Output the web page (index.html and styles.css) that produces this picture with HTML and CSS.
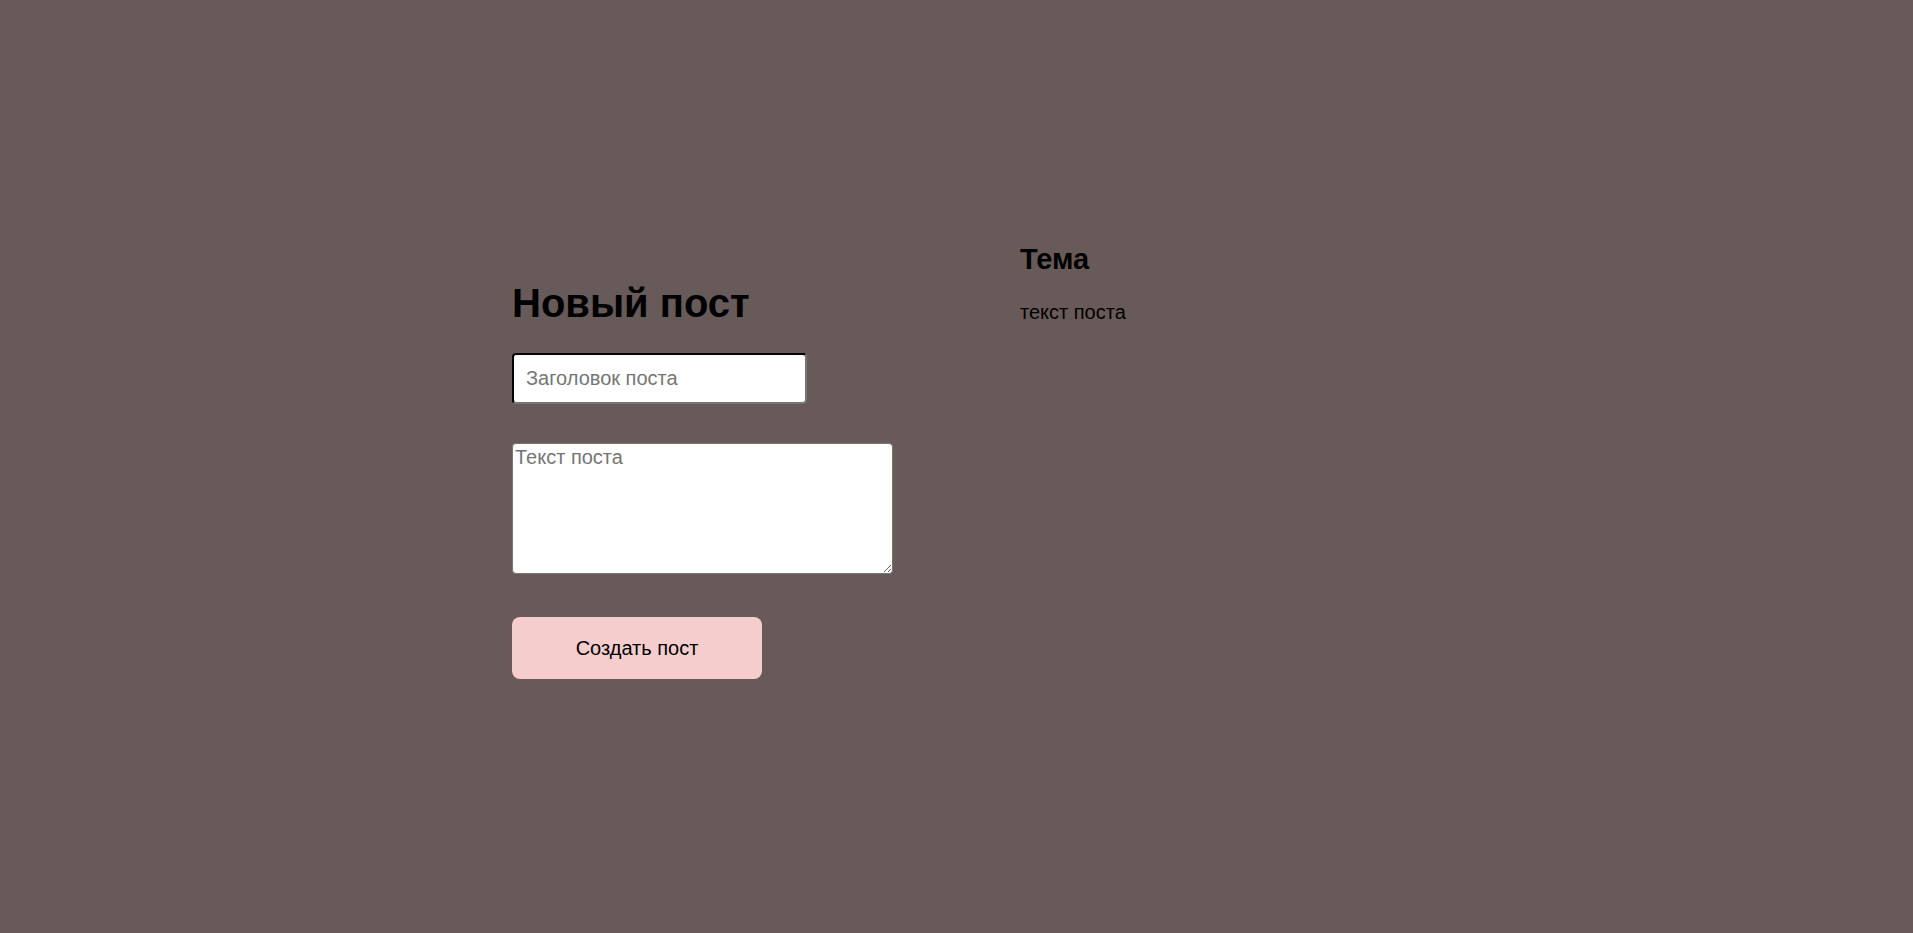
FILE: index.html
```html
<!DOCTYPE html>
<html lang="ru">
<head>
<meta charset="utf-8">
<title>Новый пост</title>
<link rel="stylesheet" href="styles.css">
</head>
<body>
<main class="page">
  <section class="form-col">
    <h1 class="form-title">Новый пост</h1>
    <form class="post-form">
      <input class="title-input" type="text" placeholder="Заголовок поста">
      <textarea class="body-input" placeholder="Текст поста"></textarea>
      <button class="submit-btn" type="button">Создать пост</button>
    </form>
  </section>
  <section class="posts-col">
    <article class="post">
      <h2 class="post-title">Тема</h2>
      <p class="post-text">текст поста</p>
    </article>
  </section>
</main>
</body>
</html>
```
FILE: styles.css
```css
html, body {
  margin: 0;
  padding: 0;
}
body {
  background: #695a5a;
  font-family: "Liberation Sans", Arial, sans-serif;
  color: #000;
  min-height: 933px;
}
.page {
  display: flex;
  justify-content: center;
  align-items: flex-start;
  gap: 127px;
  padding-top: 242px;
}
.form-col,
.posts-col {
  width: 381px;
}
.form-col {
  padding-top: 38px;
}
.form-title {
  margin: 0;
  font-size: 40px;
  line-height: 46px;
  font-weight: bold;
}
.post-form {
  display: flex;
  flex-direction: column;
  align-items: flex-start;
  margin-top: 27px;
}
.title-input {
  box-sizing: border-box;
  width: 295px;
  height: 51px;
  padding: 0 12px;
  border: 2px inset #767676;
  border-top-color: #111;
  border-left-color: #111;
  border-radius: 4px;
  background: #fff;
  font-family: "Liberation Sans", Arial, sans-serif;
  font-size: 20px;
  outline: none;
}
.title-input::placeholder,
.body-input::placeholder {
  color: #757575;
}
.body-input {
  box-sizing: border-box;
  width: 381px;
  height: 131px;
  margin-top: 39px;
  padding: 2px;
  border: 1px solid #767676;
  border-radius: 4px;
  background: #fff;
  font-family: "Liberation Sans", Arial, sans-serif;
  font-size: 20px;
  line-height: 23px;
  outline: none;
}
.submit-btn {
  margin-top: 43px;
  width: 250px;
  height: 62px;
  border: none;
  border-radius: 8px;
  background: #f5cdcd;
  color: #000;
  font-family: "Liberation Sans", Arial, sans-serif;
  font-size: 20px;
  cursor: pointer;
}
.post-title {
  margin: 0;
  font-size: 29px;
  line-height: 34px;
  font-weight: bold;
}
.post-text {
  margin: 25px 0 0;
  font-size: 20px;
  line-height: 23px;
}
```
